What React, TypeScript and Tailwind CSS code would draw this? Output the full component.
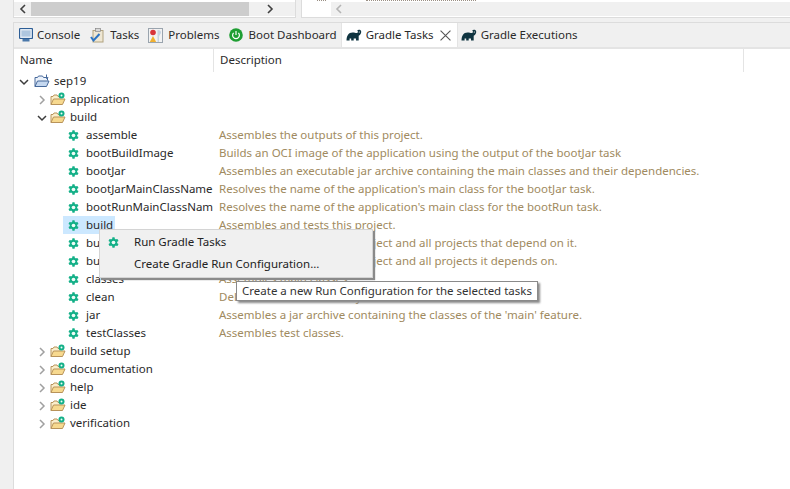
import React from "react";

const Gear = ({ className = "" }: { className?: string }) => (
  <svg viewBox="0 0 12 12" width="11" height="11" className={`shrink-0 ${className}`}>
    <g fill="#14b088">
      <circle cx="6" cy="6" r="4" />
      <rect x="4.6" y="0.4" width="2.8" height="11.2" rx="0.6" />
      <rect x="4.6" y="0.4" width="2.8" height="11.2" rx="0.6" transform="rotate(60 6 6)" />
      <rect x="4.6" y="0.4" width="2.8" height="11.2" rx="0.6" transform="rotate(120 6 6)" />
    </g>
    <circle cx="6" cy="6" r="2" fill="#f0fdf8" />
  </svg>
);

const Chevron = ({ open }: { open?: boolean }) => (
  <svg viewBox="0 0 10 10" width="10" height="10" className="shrink-0 mt-[2px]">
    <path
      d={open ? "M1 3l4 4 4-4" : "M3 1l4 4-4 4"}
      fill="none"
      stroke={open ? "#3c3c3c" : "#a0a0a0"}
      strokeWidth="1.5"
    />
  </svg>
);

const GroupFolder = () => (
  <svg viewBox="0 0 16 14" width="16" height="14" className="shrink-0">
    <path d="M1 12.5V4.5h2l1-1.5h3l1 1.5h2v2" fill="#fbeecb" stroke="#b8935a" />
    <path d="M1 12.5l2.5-5.5h11.5l-2.5 5.5z" fill="#f7d98f" stroke="#b8935a" />
    <circle cx="11.5" cy="3.5" r="3" fill="#14b088" />
    <circle cx="11.5" cy="3.5" r="1" fill="#f0fdf8" />
  </svg>
);

const ProjectFolder = () => (
  <svg viewBox="0 0 16 14" width="16" height="14" className="shrink-0">
    <path d="M1 12.5V3.5h2.5l1-1.5h4l1 1.5h4v3" fill="#eaf1fa" stroke="#46689a" />
    <path d="M1 12.5l2.5-5.5h11.5l-2.5 5.5z" fill="#c5d8f0" stroke="#46689a" />
    <path d="M12.5 0.5v4l1.8-1" fill="none" stroke="#46689a" />
  </svg>
);

const Elephant = () => (
  <svg viewBox="0 0 16 12" width="16" height="12" className="shrink-0">
    <path
      d="M0.5 11.5C0.5 7 2.5 3.5 6.5 3.5c2 0 3 .6 4.2.6.9 0 1.2-.8 1.2-1.6 0-.6-.3-.9-.7-1.1.9-.9 3.3-.9 3.9.6.6 1.6-.7 4.3-2.4 4.8V11.5H10V9.5H7.7v2H5.2V9.5H3.6v2z"
      fill="#0f3440"
    />
    <circle cx="13.3" cy="3" r="0.6" fill="#fff" />
  </svg>
);

const ConsoleIcon = () => (
  <svg viewBox="0 0 14 14" width="14" height="14" className="shrink-0">
    <rect x="0.5" y="0.5" width="13" height="10" rx="1" fill="#dfe8f2" stroke="#2d5e96" strokeWidth="1.2" />
    <rect x="2.5" y="2.5" width="9" height="6" fill="#aec6df" />
    <rect x="3.5" y="11" width="7" height="2.5" fill="#4a78aa" />
  </svg>
);

const TasksIcon = () => (
  <svg viewBox="0 0 15 15" width="15" height="15" className="shrink-0">
    <rect x="3" y="2.5" width="10" height="11.5" fill="#efe7d3" stroke="#b0a27f" />
    <rect x="5.5" y="0.5" width="5" height="3" fill="#d8d8d8" stroke="#888" strokeWidth="0.7" />
    <path d="M1 9l2.5 3.5L9.5 6" fill="none" stroke="#2b74c4" strokeWidth="2" />
  </svg>
);

const ProblemsIcon = () => (
  <svg viewBox="0 0 15 15" width="15" height="15" className="shrink-0">
    <rect x="0.5" y="0.5" width="14" height="14" fill="#f2f2f2" stroke="#9aa4ae" />
    <circle cx="5" cy="4.5" r="2.8" fill="#d8343a" />
    <path d="M5 8l3.2 6H1.8z" fill="#f0b030" />
    <path d="M10 2c2 0 3 1 3 2.5S11 7 11 9v5h-1.5V2z" fill="#c6d4e2" />
  </svg>
);

const BootIcon = () => (
  <svg viewBox="0 0 14 14" width="14" height="14" className="shrink-0">
    <circle cx="7" cy="7" r="6.8" fill="#1f9e33" />
    <path d="M4.6 4.8a3.4 3.4 0 1 0 4.8 0" fill="none" stroke="#fff" strokeWidth="1.2" />
    <path d="M7 3v4" stroke="#fff" strokeWidth="1.2" />
  </svg>
);

const Tab = ({
  icon,
  label,
  active,
  className = "",
}: {
  icon: React.ReactNode;
  label: string;
  active?: boolean;
  className?: string;
}) => (
  <div
    className={`flex items-center h-full whitespace-nowrap shrink-0 ${
      active ? "bg-white w-[117px] pl-[4px] border-x border-[#e4e4e4]" : ""
    } ${className}`}
  >
    {icon}
    <span>{label}</span>
    {active && (
      <svg viewBox="0 0 10 10" width="11" height="11" className="ml-[2px] mt-[1px] shrink-0">
        <path d="M0.5 0.5l9 9M9.5 0.5l-9 9" stroke="#555" strokeWidth="1" />
      </svg>
    )}
  </div>
);

type RowData = {
  name: string;
  desc?: string;
  kind: "project" | "group" | "task";
  open?: boolean;
  selected?: boolean;
};

const rows: RowData[] = [
  { name: "sep19", kind: "project", open: true },
  { name: "application", kind: "group" },
  { name: "build", kind: "group", open: true },
  { name: "assemble", kind: "task", desc: "Assembles the outputs of this project." },
  { name: "bootBuildImage", kind: "task", desc: "Builds an OCI image of the application using the output of the bootJar task" },
  { name: "bootJar", kind: "task", desc: "Assembles an executable jar archive containing the main classes and their dependencies." },
  { name: "bootJarMainClassName", kind: "task", desc: "Resolves the name of the application's main class for the bootJar task." },
  { name: "bootRunMainClassName", kind: "task", desc: "Resolves the name of the application's main class for the bootRun task." },
  { name: "build", kind: "task", selected: true, desc: "Assembles and tests this project." },
  { name: "buildDependents", kind: "task", desc: "Assembles and tests this project and all projects that depend on it." },
  { name: "buildNeeded", kind: "task", desc: "Assembles and tests this project and all projects it depends on." },
  { name: "classes", kind: "task", desc: "Assembles main classes." },
  { name: "clean", kind: "task", desc: "Deletes the build directory." },
  { name: "jar", kind: "task", desc: "Assembles a jar archive containing the classes of the 'main' feature." },
  { name: "testClasses", kind: "task", desc: "Assembles test classes." },
  { name: "build setup", kind: "group" },
  { name: "documentation", kind: "group" },
  { name: "help", kind: "group" },
  { name: "ide", kind: "group" },
  { name: "verification", kind: "group" },
];

const Row = ({ r }: { r: RowData }) => (
  <div className="flex h-[18px] items-center">
    <div className="w-[199px] mr-[6px] shrink-0 overflow-hidden whitespace-nowrap h-full flex items-center">
      {r.kind === "project" && (
        <div className="flex items-center pl-[5px]">
          <Chevron open />
          <span className="ml-[5px]"><ProjectFolder /></span>
          <span className="ml-[4px]">{r.name}</span>
        </div>
      )}
      {r.kind === "group" && (
        <div className="flex items-center pl-[23px]">
          <Chevron open={r.open} />
          <span className="ml-[3px]"><GroupFolder /></span>
          <span className="ml-[4px]">{r.name}</span>
        </div>
      )}
      {r.kind === "task" && (
        <div className={`flex items-center ml-[49px] pl-[5px] h-full ${r.selected ? "bg-[#cce8ff] w-[52px]" : ""}`}>
          <Gear />
          <span className="ml-[7px]">{r.name}</span>
        </div>
      )}
    </div>
    {r.desc && <div className="whitespace-nowrap text-[#a08a60]">{r.desc}</div>}
  </div>
);

export default function App() {
  return (
    <div
      className="relative w-[790px] h-[489px] overflow-hidden bg-[#f0f0f0] text-[11.5px] text-[#2a2a2a] flex flex-col"
      style={{ fontFamily: '"Noto Sans", "Liberation Sans", sans-serif' }}
    >
      {/* scrollbars */}
      <div className="flex h-[18px] shrink-0 pl-[13px] gap-[5px]">
        <div className="w-[283px] bg-white border-b border-r border-l border-[#dcdcdc] flex flex-col">
          <div className="h-[2px]" />
          <div className="flex items-center h-[14px] bg-[#f0f0f0]">
            <div className="w-[17px] flex justify-center">
              <svg viewBox="0 0 8 10" width="8" height="10"><path d="M6 1L2 5l4 4" fill="none" stroke="#404040" strokeWidth="1.6" /></svg>
            </div>
            <div className="w-[218px] h-full bg-[#cdcdcd]" />
            <div className="flex-1 flex pl-[17px]">
              <svg viewBox="0 0 8 10" width="8" height="10"><path d="M2 1l4 4-4 4" fill="none" stroke="#404040" strokeWidth="1.6" /></svg>
            </div>
          </div>
        </div>
        <div className="flex-1 bg-white border-b border-l border-[#dcdcdc] flex flex-col">
          <div className="h-[2px] flex items-start">
            <div className="ml-[15px] w-[9px] border-t border-dotted border-[#9a8f84]" />
            <div className="ml-[40px] w-[110px] border-t border-dotted border-[#9a8f84]" />
          </div>
          <div className="flex h-[14px]">
            <div className="w-[29px] bg-white" />
            <div className="flex-1 bg-[#f0f0f0] flex items-center pl-[4px]">
              <svg viewBox="0 0 8 10" width="8" height="10"><path d="M6 1L2 5l4 4" fill="none" stroke="#b4b4b4" strokeWidth="1.6" /></svg>
            </div>
          </div>
        </div>
      </div>

      {/* view */}
      <div className="mt-[4px] ml-[13px] flex-1 flex flex-col bg-white border-l border-t border-[#dcdcdc]">
        <div className="flex items-center h-[26px] shrink-0 bg-[#f0f0f0] border-b-2 border-[#e4e4e4] pl-[5px]">
          <Tab icon={<ConsoleIcon />} label="Console" className="gap-[4px]" />
          <Tab icon={<TasksIcon />} label="Tasks" className="ml-[10px] gap-[5px]" />
          <Tab icon={<ProblemsIcon />} label="Problems" className="ml-[9px] gap-[5px]" />
          <Tab icon={<BootIcon />} label="Boot Dashboard" className="ml-[9px] gap-[6px]" />
          <Tab icon={<Elephant />} label="Gradle Tasks" active className="ml-[4px] gap-[4px]" />
          <Tab icon={<Elephant />} label="Gradle Executions" className="ml-[3px] gap-[4px]" />
        </div>
        <div className="flex h-[23px] shrink-0 items-center">
          <div className="w-[200px] h-full border-r border-[#e4e4e4] pl-[6px] pb-[2px] flex items-center">Name</div>
          <div className="w-[530px] h-full border-r border-[#e4e4e4] pl-[6px] pb-[2px] flex items-center">Description</div>
        </div>
        <div className="flex flex-col">
          {rows.map((r, i) => (
            <Row key={i} r={r} />
          ))}
        </div>
      </div>

      {/* context menu */}
      <div className="absolute left-[99px] top-[229px] w-[274px] h-[49px] bg-[#f0f0f0] border border-[#d4d4d4] shadow-[2px_2px_1px_#8a8a8a] text-[#222]">
        <div className="flex items-center h-[24px] pl-[8px]">
          <Gear />
          <span className="ml-[15px]">Run Gradle Tasks</span>
        </div>
        <div className="flex items-center h-[20px] pl-[34px]">Create Gradle Run Configuration...</div>
      </div>

      {/* tooltip */}
      <div className="absolute left-[236px] top-[281px] w-[302px] h-[20px] bg-white border border-[#8a8a8a] shadow-[2px_2px_2px_#8a8a8a] pl-[5px] flex items-center whitespace-nowrap text-[#333]">
        Create a new Run Configuration for the selected tasks
      </div>
    </div>
  );
}
